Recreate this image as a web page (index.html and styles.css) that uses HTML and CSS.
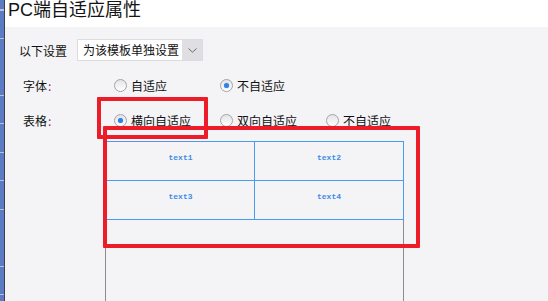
FILE: index.html
```html
<!DOCTYPE html>
<html lang="zh">
<head>
<meta charset="utf-8">
<title>PC端自适应属性</title>
<link rel="stylesheet" href="styles.css">
</head>
<body>
<div class="app">
  <div class="strip"></div>
  <div class="main">
    <div class="title">PC端自适应属性</div>
    <div class="content">
      <div class="row">
        <span class="label label-setting">以下设置</span>
        <div class="select">
          <span class="select-value">为该模板单独设置</span>
          <span class="select-arrow"><svg width="9" height="5" viewBox="0 0 9 5"><path d="M0.5 0.5 L4.5 4.2 L8.5 0.5" fill="none" stroke="#6a6a6a" stroke-width="1"/></svg></span>
        </div>
      </div>
      <div class="row">
        <span class="label">字体<span class="colon">:</span></span>
        <label class="opt"><span class="radio"></span>自适应</label>
        <label class="opt"><span class="radio checked"></span>不自适应</label>
      </div>
      <div class="row">
        <span class="label">表格<span class="colon">:</span></span>
        <label class="opt"><span class="radio checked"></span>横向自适应</label>
        <label class="opt"><span class="radio"></span>双向自适应</label>
        <label class="opt"><span class="radio"></span>不自适应</label>
      </div>
      <div class="tablebox">
        <div class="grid">
          <div class="cell">text1</div>
          <div class="cell">text2</div>
          <div class="cell">text3</div>
          <div class="cell">text4</div>
        </div>
      </div>
    </div>
  </div>
  <div class="mark mark-radio"></div>
  <div class="mark mark-table"></div>
</div>
</body>
</html>
```
FILE: styles.css
```css
html, body {
  margin: 0;
  padding: 0;
}
body {
  font-family: "Noto Sans CJK SC", "Noto Sans", sans-serif;
  font-size: 12px;
  color: #111;
  background: #f4f4f7;
}
.app {
  position: relative;
  display: flex;
  width: 548px;
  height: 301px;
  overflow: hidden;
}
.strip {
  width: 4px;
  flex: none;
  border-right: 1px solid #3a3f52;
  background: repeating-linear-gradient(to bottom, #5b7bc2 0 9.5px, #b9c1d8 9.5px 10.5px, #5b7bc2 10.5px 28.5px);
}
.main {
  flex: 1;
  display: flex;
  flex-direction: column;
}
.title {
  height: 27px;
  flex: none;
  box-sizing: border-box;
  background: #fff;
  padding-left: 3px;
  font-family: "Liberation Sans", "Noto Sans CJK SC", sans-serif;
  font-size: 18px;
  line-height: 21px;
  color: #141414;
}
.content {
  flex: 1;
  background: #f4f4f7;
  padding-top: 11px;
  display: flex;
  flex-direction: column;
  gap: 11px;
}
.row {
  display: flex;
  align-items: center;
  height: 24px;
}
.label {
  width: 91px;
  padding-left: 18px;
  flex: none;
}
.label-setting {
  width: auto;
  padding-left: 14px;
  margin-right: 10px;
}
.colon {
  color: #7b2a7b;
  margin-left: 1px;
}
.select {
  display: flex;
  width: 124px;
  height: 20px;
  border: 1px solid #dcdce0;
  background: #fff;
}
.select-value {
  flex: 1;
  padding-left: 5px;
  line-height: 20px;
  color: #111;
}
.select-arrow {
  width: 20px;
  background: #dfdfe3;
  display: flex;
  align-items: center;
  justify-content: center;
}
.opt {
  display: flex;
  align-items: center;
  width: 106px;
  flex: none;
}
.radio {
  width: 11px;
  height: 11px;
  border: 1px solid #a4a4a8;
  border-radius: 50%;
  background: linear-gradient(to bottom, #e4e4e6, #ffffff);
  margin-right: 4px;
  position: relative;
  flex: none;
}
.radio.checked::after {
  content: "";
  position: absolute;
  left: 3px;
  top: 3px;
  width: 5px;
  height: 5px;
  border-radius: 50%;
  background: #2f7fe6;
  box-shadow: 0 0 1px #7fb0f0;
}
.tablebox {
  margin-left: 100px;
  margin-top: -2px;
  width: 297px;
  height: 220px;
  flex: none;
  border-left: 1px solid #8c8c8c;
  border-right: 1px solid #8c8c8c;
}
.grid {
  display: grid;
  grid-template-columns: 148px 149px;
  grid-auto-rows: 39px;
  width: 297px;
  border-top: 1px solid #4a9af0;
  border-left: 1px solid #4a9af0;
  margin-right: -1px;
}
.cell {
  border-right: 1px solid #4a9af0;
  border-bottom: 1px solid #4a9af0;
  display: flex;
  justify-content: center;
  align-items: center;
  padding-bottom: 7px;
  box-sizing: border-box;
  font-family: "Liberation Mono", "DejaVu Sans Mono", monospace;
  font-size: 8px;
  font-weight: bold;
  color: #3c8ce6;
}
.mark {
  position: absolute;
  border: 4px solid #ec1c28;
  border-radius: 1px;
  box-sizing: border-box;
  pointer-events: none;
}
.mark-radio {
  left: 97px;
  top: 97px;
  width: 111px;
  height: 42px;
}
.mark-table {
  left: 103px;
  top: 126px;
  width: 317px;
  height: 122px;
}
```
